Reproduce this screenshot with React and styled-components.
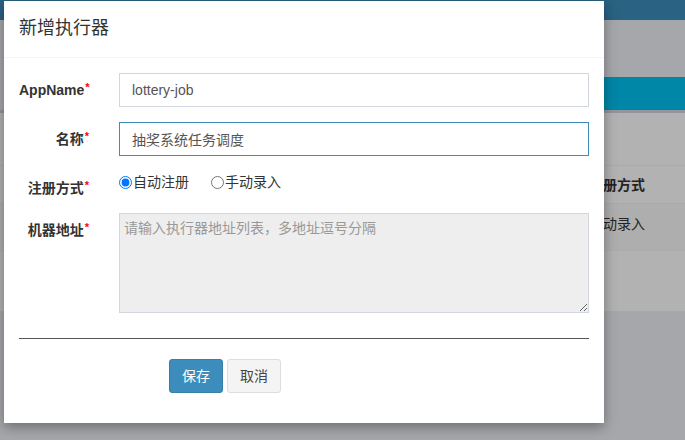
import React from "react";
import styled, { createGlobalStyle } from "styled-components";

const GlobalStyle = createGlobalStyle`
  html, body {
    margin: 0;
    padding: 0;
    width: 685px;
    height: 440px;
    overflow: hidden;
    font-family: "Liberation Sans", "Noto Sans CJK SC", sans-serif;
  }
  * { box-sizing: border-box; }
`;

const Page = styled.div`
  position: relative;
  width: 685px;
  height: 440px;
  background: #ecf0f5;
  display: flex;
  flex-direction: column;
  overflow: hidden;
`;

const TopBar = styled.div`
  height: 20px;
  background: #3c8dbc;
  flex: none;
`;

const ActionBar = styled.div`
  margin-top: 57px;
  height: 33px;
  display: flex;
  justify-content: flex-end;
  flex: none;
`;

const TealButton = styled.div`
  width: 380px;
  background: #00c0ef;
`;

const Box = styled.div`
  height: 201px;
  background: #fff;
  border-top: 3px solid #d2d6de;
  padding-top: 52px;
  flex: none;
`;

const Table = styled.div`
  display: grid;
  grid-template-columns: 589px 96px;
`;

const Cell = styled.div`
  border-top: 1px solid #f4f4f4;
  font-size: 14px;
  line-height: 20px;
  color: #333;
  height: ${(p) => (p.$head ? 38 : 48)}px;
  padding: ${(p) => (p.$head ? "9px 0 0" : "10px 0 0")};
  font-weight: ${(p) => (p.$head ? 700 : 400)};
  background: ${(p) => (p.$stripe ? "#f9f9f9" : "#fff")};
  white-space: nowrap;
  &:last-child, &:nth-last-child(2) {
    border-bottom: 1px solid #f4f4f4;
  }
`;

const Overlay = styled.div`
  position: absolute;
  inset: 0;
  background: rgba(0, 0, 0, 0.3);
`;

const Modal = styled.div`
  position: absolute;
  top: 1px;
  left: 4px;
  width: 600px;
  background: #fff;
  box-shadow: 0 4px 12px rgba(0, 0, 0, 0.35);
`;

const ModalHeader = styled.div`
  padding: 15px;
  border-bottom: 1px solid #f4f4f4;
`;

const Title = styled.h4`
  margin: 0;
  font-size: 18px;
  line-height: 1.42857;
  font-weight: 400;
  color: #333;
`;

const ModalBody = styled.div`
  padding: 15px;
`;

const FormRow = styled.div`
  display: grid;
  grid-template-columns: 100px 500px;
  margin: 0 -15px 15px;
`;

const Label = styled.label`
  padding: 7px 15px 0;
  text-align: right;
  font-weight: 700;
  font-size: 14px;
  line-height: 20px;
  color: #333;
  white-space: nowrap;
`;

const Req = styled.span`
  color: #f00;
  font-size: 11px;
  vertical-align: top;
  line-height: 14px;
  margin-left: 1px;
`;

const Control = styled.div`
  padding: 0 15px;
`;

const Input = styled.input`
  display: block;
  width: 100%;
  height: 34px;
  padding: 6px 12px;
  font-family: inherit;
  font-size: 14px;
  line-height: 20px;
  color: #555;
  background: #fff;
  border: 1px solid ${(p) => (p.$focus ? "#3c8dbc" : "#d2d6de")};
  border-radius: 0;
  outline: none;
  box-shadow: none;
`;

const RadioGroup = styled.div`
  display: flex;
  gap: 22px;
  height: 23px;
  align-items: center;
`;

const RadioLabel = styled.label`
  display: inline-flex;
  align-items: center;
  font-size: 14px;
  line-height: 22px;
  color: #333;
`;

const Radio = styled.input`
  margin: 0 1px 0 0;
  width: 13px;
  height: 13px;
`;

const TextArea = styled.textarea`
  display: block;
  width: 100%;
  height: 100px;
  padding: 4px;
  font-family: inherit;
  font-size: 14px;
  line-height: 20px;
  color: #555;
  background: #eee;
  border: 1px solid #d2d6de;
  border-radius: 0;
  outline: none;
  resize: both;
  &::placeholder {
    color: #999;
  }
`;

const Divider = styled.hr`
  margin: 25px 0 20px;
  border: 0;
  border-top: 1px solid #555;
  height: 0;
`;

const ButtonRow = styled.div`
  display: flex;
  gap: 4px;
  padding-left: 150px;
  margin-bottom: 15px;
`;

const Button = styled.button`
  padding: 6px 12px;
  font-family: inherit;
  font-size: 14px;
  line-height: 20px;
  border-radius: 3px;
  border: 1px solid ${(p) => (p.$primary ? "#367fa9" : "#ddd")};
  background: ${(p) => (p.$primary ? "#3c8dbc" : "#f4f4f4")};
  color: ${(p) => (p.$primary ? "#fff" : "#444")};
  cursor: pointer;
`;

export default function App() {
  return (
    <>
      <GlobalStyle />
      <Page>
        <TopBar />
        <ActionBar>
          <TealButton />
        </ActionBar>
        <Box>
          <Table>
            <Cell $head />
            <Cell $head>注册方式</Cell>
            <Cell $stripe />
            <Cell $stripe>手动录入</Cell>
          </Table>
        </Box>
        <Overlay />
        <Modal>
          <ModalHeader>
            <Title>新增执行器</Title>
          </ModalHeader>
          <ModalBody>
            <FormRow>
              <Label>
                AppName<Req>*</Req>
              </Label>
              <Control>
                <Input defaultValue="lottery-job" />
              </Control>
            </FormRow>
            <FormRow>
              <Label>
                名称<Req>*</Req>
              </Label>
              <Control>
                <Input $focus defaultValue="抽奖系统任务调度" />
              </Control>
            </FormRow>
            <FormRow>
              <Label>
                注册方式<Req>*</Req>
              </Label>
              <Control>
                <RadioGroup>
                  <RadioLabel>
                    <Radio type="radio" name="addressType" defaultChecked />
                    自动注册
                  </RadioLabel>
                  <RadioLabel>
                    <Radio type="radio" name="addressType" />
                    手动录入
                  </RadioLabel>
                </RadioGroup>
              </Control>
            </FormRow>
            <FormRow>
              <Label>
                机器地址<Req>*</Req>
              </Label>
              <Control>
                <TextArea
                  readOnly
                  placeholder="请输入执行器地址列表，多地址逗号分隔"
                />
              </Control>
            </FormRow>
            <Divider />
            <ButtonRow>
              <Button $primary>保存</Button>
              <Button>取消</Button>
            </ButtonRow>
          </ModalBody>
        </Modal>
      </Page>
    </>
  );
}
